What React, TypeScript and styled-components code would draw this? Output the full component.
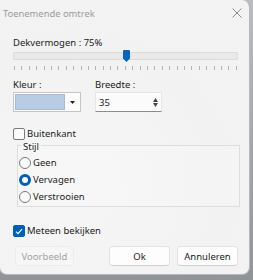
import React from 'react'
import styled, { createGlobalStyle } from 'styled-components'

const GlobalStyle = createGlobalStyle`
  html, body {
    margin: 0;
    padding: 0;
    background: linear-gradient(180deg, #b9bdc1 0%, #8f9498 100%);
    width: 253px;
    height: 280px;
    overflow: hidden;
  }
  * { box-sizing: border-box; }
`

const Window = styled.div`
  width: 251px;
  height: 275px;
  margin-left: -1px;
  border: 1px solid #b8b8b8;
  border-top: none;
  border-radius: 0 8px 8px 8px;
  background: radial-gradient(circle at 30% 70%, #f6f6f6 0%, #f2f2f2 55%, #f3f3f3 100%);
  font-family: 'Noto Sans', 'Open Sans', sans-serif;
  font-size: 9.5px;
  color: #1b1b1b;
  display: flex;
  flex-direction: column;
  overflow: hidden;
`

const TitleBar = styled.div`
  height: 26px;
  display: flex;
  align-items: center;
  justify-content: space-between;
  padding: 0 7px 0 3px;
  color: #9b9b9b;
  font-size: 9.4px;
`

const Body = styled.div`
  padding: 0 11px 0 13px;
  display: flex;
  flex-direction: column;
`

const Label = styled.div<{ $top?: number }>`
  line-height: 16px;
  margin-top: ${({ $top }) => $top ?? 0}px;
  white-space: nowrap;
`

const Slider = styled.div`
  margin-top: 1px;
  display: flex;
  flex-direction: column;
`

const Track = styled.div`
  position: relative;
  height: 8px;
  border: 1px solid #dcdcdc;
  background: #e9e9e9;
  border-radius: 1px;
`

const Thumb = styled.svg`
  position: absolute;
  left: 109px;
  top: -3px;
`

const Ticks = styled.div`
  margin: 6px 1px 0 1px;
  height: 4px;
  display: flex;
  justify-content: space-between;
`

const Tick = styled.span`
  width: 1px;
  height: 4px;
  background: #b4b4b4;
`

const FieldGrid = styled.div`
  margin-top: 8px;
  display: grid;
  grid-template-columns: 82px 67px;
`

const FieldLabel = styled.div`
  line-height: 14px;
  height: 14px;
  white-space: nowrap;
`

const ColorCombo = styled.div`
  width: 68px;
  height: 20px;
  border: 1px solid #c6c6c6;
  background: #fcfcfc;
  display: flex;
  align-items: center;
  padding: 1px;
`

const Swatch = styled.div`
  width: 50px;
  height: 16px;
  background: #b9cce5;
  border: 1px solid #a8bbd4;
`

const ComboArrow = styled.div`
  flex: 1;
  display: flex;
  justify-content: center;
  align-items: center;
`

const SpinBox = styled.div`
  width: 67px;
  height: 20px;
  border: 1px solid #e6e6e6;
  border-bottom: 1px solid #8c8c8c;
  background: #fbfbfb;
  display: flex;
  align-items: center;
  padding: 0 3px 0 3px;
  justify-content: space-between;
`

const SpinArrows = styled.div`
  display: flex;
  flex-direction: column;
  gap: 1px;
`

const CheckRow = styled.label<{ $top: number }>`
  margin-top: ${({ $top }) => $top}px;
  height: 12px;
  line-height: 12px;
  display: flex;
  align-items: center;
  gap: 2px;
  white-space: nowrap;
`

const CheckBox = styled.span<{ $checked?: boolean }>`
  width: 12px;
  height: 12px;
  flex: none;
  border-radius: 2px;
  border: 1px solid ${({ $checked }) => ($checked ? '#005fb8' : '#7a7a7a')};
  background: ${({ $checked }) => ($checked ? '#005fb8' : '#fbfbfb')};
  display: flex;
  align-items: center;
  justify-content: center;
`

const GroupBox = styled.fieldset`
  margin: -3px 0 0 4px;
  width: 223px;
  min-width: 0;
  border: 1px solid #dedede;
  background: rgba(255, 255, 255, 0.2);
  padding: 1px 0 1px 1px;
  display: flex;
  flex-direction: column;
`

const GroupTitle = styled.legend`
  margin-left: 2px;
  padding: 4px 2px 0;
  line-height: 12px;
`

const RadioRow = styled.label`
  height: 17px;
  display: flex;
  align-items: center;
  gap: 2px;
  white-space: nowrap;
`

const Radio = styled.span<{ $checked?: boolean }>`
  width: 12px;
  height: 12px;
  flex: none;
  border-radius: 50%;
  border: ${({ $checked }) => ($checked ? '3px solid #005fb8' : '1px solid #7a7a7a')};
  background: ${({ $checked }) => ($checked ? '#ffffff' : '#fbfbfb')};
`

const ButtonRow = styled.div`
  margin-top: 9px;
  display: flex;
  padding-left: 2px;
`

const Button = styled.button<{ $width: number; $disabled?: boolean }>`
  width: ${({ $width }) => $width}px;
  height: 20px;
  padding: 0;
  font: inherit;
  border-radius: 4px;
  border: 1px solid ${({ $disabled }) => ($disabled ? '#ececec' : '#e2e2e2')};
  border-bottom-color: ${({ $disabled }) => ($disabled ? '#ececec' : '#cfcfcf')};
  background: ${({ $disabled }) => ($disabled ? '#f6f6f6' : '#fdfdfd')};
  color: ${({ $disabled }) => ($disabled ? '#a2a2a2' : '#1b1b1b')};
  & + & {
    margin-left: 7px;
  }
  &:nth-child(2) {
    margin-left: auto;
  }
`

const tickCount = 31

export default function App() {
  return (
    <>
      <GlobalStyle />
      <Window>
        <TitleBar>
          <span>Toenemende omtrek</span>
          <svg width="10" height="10" viewBox="0 0 10 10">
            <path d="M0.5 0.5 L9.5 9.5 M9.5 0.5 L0.5 9.5" stroke="#8a8a8a" strokeWidth="1" />
          </svg>
        </TitleBar>
        <Body>
          <Label $top={9}>Dekvermogen : 75%</Label>
          <Slider>
            <Track>
              <Thumb width="7" height="12" viewBox="0 0 7 12">
                <path d="M1.2 0 H5.8 A1.2 1.2 0 0 1 7 1.2 V8.5 L3.5 12 L0 8.5 V1.2 A1.2 1.2 0 0 1 1.2 0 Z" fill="#0067c0" />
              </Thumb>
            </Track>
            <Ticks>
              {Array.from({ length: tickCount }, (_, i) => (
                <Tick key={i} />
              ))}
            </Ticks>
          </Slider>
          <FieldGrid>
            <FieldLabel>Kleur :</FieldLabel>
            <FieldLabel>Breedte :</FieldLabel>
            <ColorCombo>
              <Swatch />
              <ComboArrow>
                <svg width="5" height="3" viewBox="0 0 5 3">
                  <path d="M0 0 H5 L2.5 3 Z" fill="#222" />
                </svg>
              </ComboArrow>
            </ColorCombo>
            <SpinBox>
              <span>35</span>
              <SpinArrows>
                <svg width="5" height="4" viewBox="0 0 5 4">
                  <path d="M2.5 0 L5 4 H0 Z" fill="#444" />
                </svg>
                <svg width="5" height="4" viewBox="0 0 5 4">
                  <path d="M0 0 H5 L2.5 4 Z" fill="#444" />
                </svg>
              </SpinArrows>
            </SpinBox>
          </FieldGrid>
          <CheckRow $top={16}>
            <CheckBox />
            Buitenkant
          </CheckRow>
          <GroupBox>
            <GroupTitle>Stijl</GroupTitle>
            <RadioRow>
              <Radio />
              Geen
            </RadioRow>
            <RadioRow>
              <Radio $checked />
              Vervagen
            </RadioRow>
            <RadioRow>
              <Radio />
              Verstrooien
            </RadioRow>
          </GroupBox>
          <CheckRow $top={18}>
            <CheckBox $checked>
              <svg width="8" height="7" viewBox="0 0 8 7">
                <path d="M1 3.6 L3 5.6 L7 1.2" stroke="#fff" strokeWidth="1.2" fill="none" />
              </svg>
            </CheckBox>
            Meteen bekijken
          </CheckRow>
          <ButtonRow>
            <Button $width={59} $disabled disabled>
              Voorbeeld
            </Button>
            <Button $width={61}>Ok</Button>
            <Button $width={61}>Annuleren</Button>
          </ButtonRow>
        </Body>
      </Window>
    </>
  )
}
